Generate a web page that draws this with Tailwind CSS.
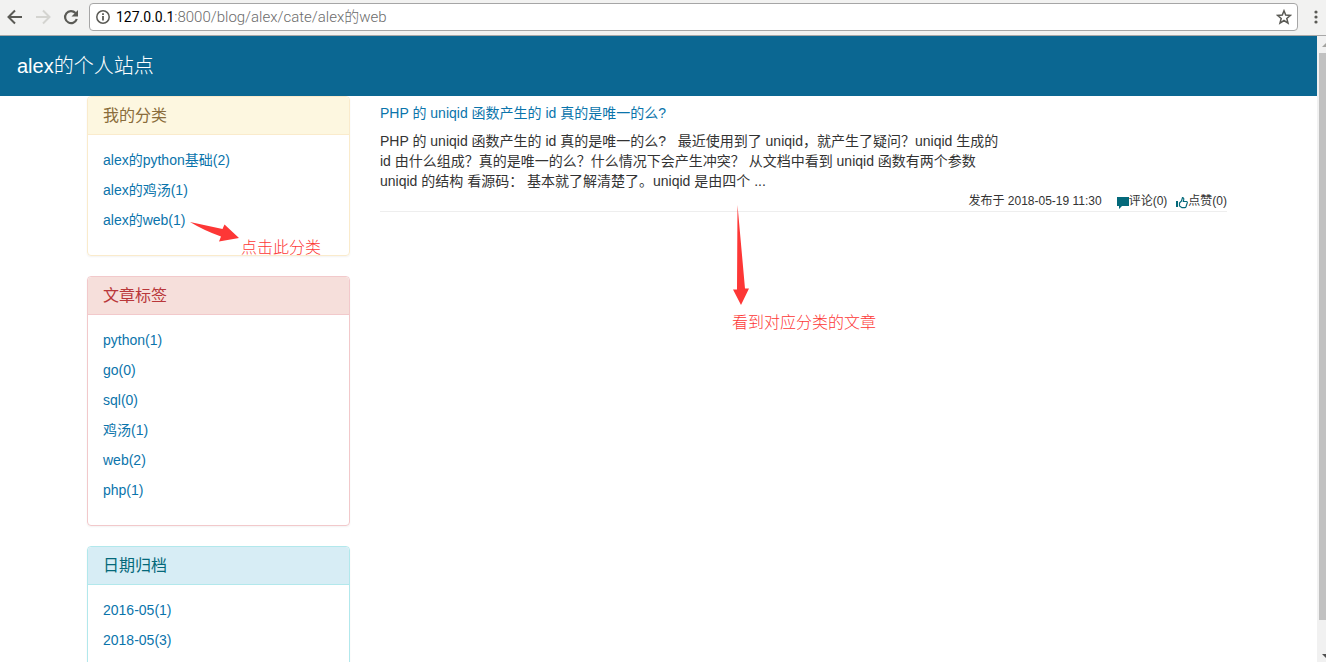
<!DOCTYPE html>
<html lang="zh-CN">
<head>
<meta charset="utf-8">
<title>alex的个人站点</title>
<script src="https://cdn.jsdelivr.net/npm/@tailwindcss/browser@4"></script>
</head>
<body class="flex h-screen flex-col overflow-hidden bg-white font-['Liberation_Sans','Noto_Sans_CJK_SC',sans-serif] text-sm/5 text-[#333]">

<!-- Browser toolbar -->
<div class="flex h-9 shrink-0 items-center border-b border-[#a8a8a8] bg-[#f2f2f1] pb-0.5">
  <button type="button" aria-label="后退" class="ml-1.5 shrink-0">
    <svg class="block size-[18px]" viewBox="0 0 18 18" fill="none" stroke="#5a5a55" stroke-width="2"><path d="M16 9H3M9 2.500 2.500 9 9 15.500"/></svg>
  </button>
  <button type="button" aria-label="前进" class="ml-2.5 shrink-0">
    <svg class="block size-[18px]" viewBox="0 0 18 18" fill="none" stroke="#d4d4d0" stroke-width="2"><path d="M2 9h13M9 2.500 15.500 9 9 15.500"/></svg>
  </button>
  <button type="button" aria-label="重新加载" class="ml-2.5 shrink-0">
    <svg class="block size-[18px]" viewBox="0 0 18 18" fill="none"><path d="M14.800 11A6 6 0 1 1 13.500 5" stroke="#5a5a55" stroke-width="2.200"/><path d="M16 2v6.500H9.500z" fill="#5a5a55"/></svg>
  </button>
  <div class="ml-[9px] flex h-7 min-w-0 flex-1 items-center rounded-sm border border-[#a6a6a6] bg-white pr-[5px] pl-1.5">
    <svg class="size-3.5 shrink-0" viewBox="0 0 14 14" fill="none" stroke="#5a5a55"><circle cx="7" cy="7" r="6.200" stroke-width="1.500"/><path d="M7 6v4.500M7 3.200v1.700" stroke-width="1.800"/></svg>
    <label for="url" class="ml-1.5 font-['Roboto','Noto_Sans_CJK_SC',sans-serif] text-sm/5 text-black">127.0.0.1</label>
    <input id="url" type="text" value=":8000/blog/alex/cate/alex的web" class="h-5 min-w-0 flex-1 bg-transparent font-['Roboto','Noto_Sans_CJK_SC',sans-serif] text-[15px]/5 font-light text-[#6b6b6b] outline-none">
    <button type="button" aria-label="收藏" class="shrink-0">
      <svg class="block size-4" viewBox="0 0 16 16" fill="none" stroke="#5a5a55" stroke-width="1.500"><path d="m8 1.800 1.700 4.300 4.700.3-3.600 3 1.200 4.700L8 11.500l-4 2.600 1.200-4.700-3.600-3 4.700-.3z"/></svg>
    </button>
  </div>
  <button type="button" aria-label="菜单" class="ml-4 mr-2 shrink-0">
    <svg class="block h-4 w-1" viewBox="0 0 4 16" fill="#5a5a55"><circle cx="2" cy="3" r="1.600"/><circle cx="2" cy="8" r="1.600"/><circle cx="2" cy="13" r="1.600"/></svg>
  </button>
</div>

<div class="flex min-h-0 flex-1">
  <div class="min-w-0 flex-1 overflow-hidden">
    <header class="flex h-15 items-center bg-[#0b6792] px-[17px] text-xl font-light text-white">
      <h1>alex的个人站点</h1>
    </header>

    <div class="relative pr-[3px]">
      <div class="mx-auto flex max-w-[1140px] gap-[30px]">
        <aside class="flex w-[263px] shrink-0 flex-col gap-5">
          <section class="rounded border border-[#faebcc] shadow-xs">
            <h2 class="rounded-t border-b border-[#faebcc] bg-[#fdf7e0] px-[15px] pt-[9px] pb-2 text-base/5 text-[#8a6d3b]">我的分类</h2>
            <ul class="flex flex-col gap-2.5 px-[15px] pt-[15px] pb-[25px] text-[#0a74ab]">
              <li><a href="#">alex的python基础(2)</a></li>
              <li><a href="#">alex的鸡汤(1)</a></li>
              <li><a href="#">alex的web(1)</a></li>
            </ul>
          </section>
          <section class="rounded border border-[#f2c9cb] shadow-xs">
            <h2 class="rounded-t border-b border-[#f2c9cb] bg-[#f6dfdb] px-[15px] pt-[9px] pb-2 text-base/5 text-[#b9373a]">文章标签</h2>
            <ul class="flex flex-col gap-2.5 px-[15px] pt-[15px] pb-[25px] text-[#0a74ab]">
              <li><a href="#">python(1)</a></li>
              <li><a href="#">go(0)</a></li>
              <li><a href="#">sql(0)</a></li>
              <li><a href="#">鸡汤(1)</a></li>
              <li><a href="#">web(2)</a></li>
              <li><a href="#">php(1)</a></li>
            </ul>
          </section>
          <section class="rounded border border-[#b2e8ec] shadow-xs">
            <h2 class="rounded-t border-b border-[#b2e8ec] bg-[#d7edf5] px-[15px] pt-[9px] pb-2 text-base/5 text-[#04697a]">日期归档</h2>
            <ul class="flex flex-col gap-2.5 px-[15px] pt-[15px] pb-[25px] text-[#0a74ab]">
              <li><a href="#">2016-05(1)</a></li>
              <li><a href="#">2018-05(3)</a></li>
            </ul>
          </section>
        </aside>

        <main class="min-w-0 flex-1 pt-[7px]">
          <article class="flex flex-col border-b border-[#eee]">
            <h3 class="text-[#0a74ab]"><a href="#">PHP 的 uniqid 函数产生的 id 真的是唯一的么?</a></h3>
            <p class="mt-2 whitespace-pre">PHP 的 uniqid 函数产生的 id 真的是唯一的么?   最近使用到了 uniqid，就产生了疑问？uniqid 生成的<br>id 由什么组成？真的是唯一的么？什么情况下会产生冲突？ 从文档中看到 uniqid 函数有两个参数<br>uniqid 的结构 看源码： 基本就了解清楚了。uniqid 是由四个 ...</p>
            <div class="flex items-center justify-end text-xs/5">
              <span>发布于 2018-05-19 11:30</span>
              <a href="#" class="ml-[15px] flex items-center"><svg class="mt-1 size-3" viewBox="0 0 12 12" fill="#04697a"><path d="M0 0h12v9H5l-3 3V9H0z"/></svg>评论(0)</a>
              <a href="#" class="ml-[9px] flex items-center"><svg class="mt-1 size-3" viewBox="0 0 12 12" fill="none"><path d="M0 4h2v6H0z" fill="#04697a"/><path d="M3.500 6 5.500 4 6.500.700q1.500 0 1.200 2L7.300 4.500h3.200q1 .2.800 1.200L10 9.700q-.4 1-1.200 1H6L3.500 9z" stroke="#04697a" stroke-width="1.200"/></svg>点赞(0)</a>
            </div>
          </article>
        </main>
      </div>

      <!-- Annotations over the page -->
      <svg class="absolute top-[125px] left-[189px] h-[22px] w-[51px]" viewBox="0 0 51 22" fill="#fd3736"><path d="M1 1 33.500 8 35.500 3.500 50 17 30 20.500 32 15.500Q15 9.500 1 1z"/></svg>
      <p class="absolute top-[142px] left-[241px] text-base/5 font-light text-[#fd3736]">点击此分类</p>
      <svg class="absolute top-[109px] left-[732px] h-[100px] w-[18px]" viewBox="0 0 18 100" fill="#fd3736"><path d="M5.500 0 13 83.500h4L9 100 1 84.500h4z"/></svg>
      <p class="absolute top-[217px] left-[732px] text-base/5 font-light text-[#fd3736]">看到对应分类的文章</p>
    </div>
  </div>

  <!-- Scrollbar -->
  <div class="flex w-[9px] shrink-0 flex-col bg-[#f1f1f1] pl-0.5" aria-hidden="true">
    <svg class="h-[17px] w-[7px] shrink-0" viewBox="0 0 7 17" fill="#a3a3a0"><path d="M3 11 7 7v4z"/></svg>
    <div class="flex-1 bg-[#c1c1c1]"></div>
    <svg class="h-[42px] w-[7px] shrink-0" viewBox="0 0 7 42" fill="#505050"><path d="M3 34h4v4z"/></svg>
  </div>
</div>
</body>
</html>
